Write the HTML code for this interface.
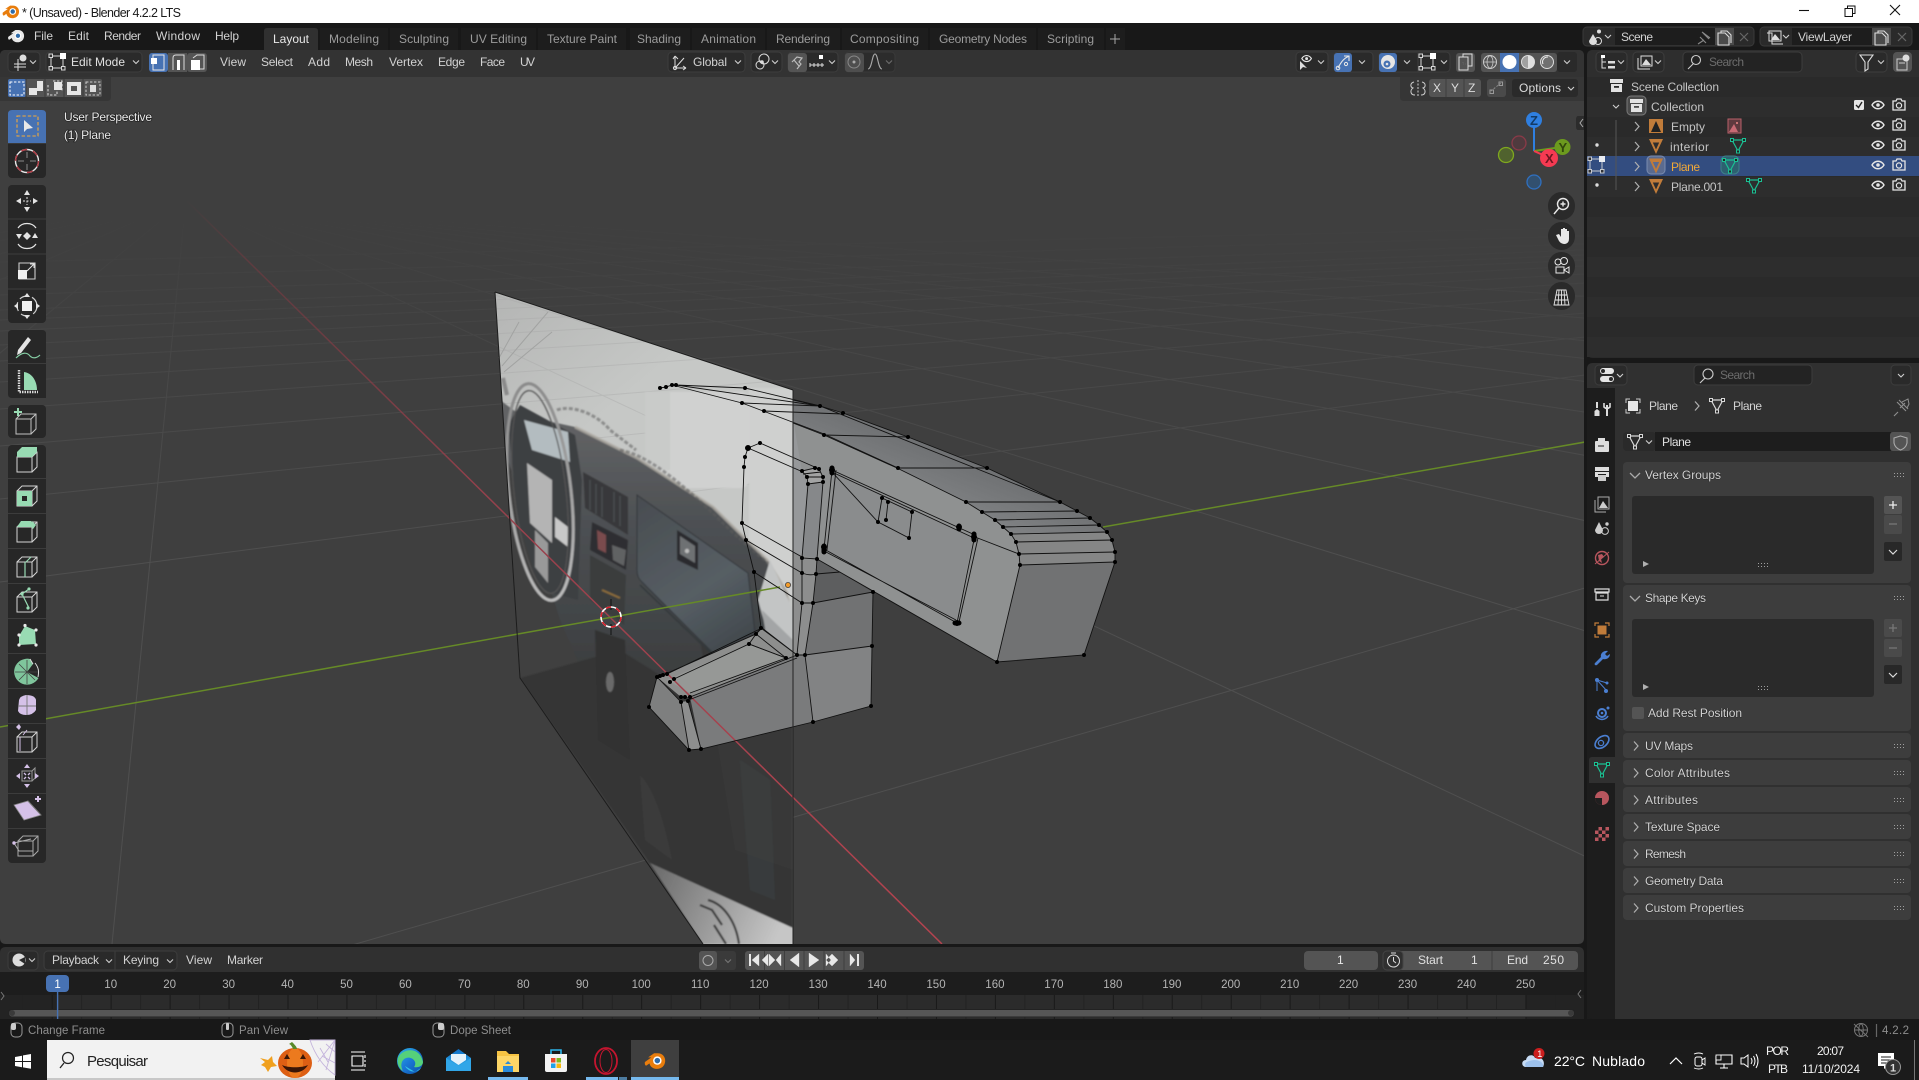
<!DOCTYPE html>
<html><head><meta charset="utf-8"><title>Blender 4.2.2 LTS</title>
<style>
html,body{margin:0;padding:0;background:#181818;overflow:hidden}
svg{display:block;position:absolute;left:0;top:0}
text{font-family:"Liberation Sans",sans-serif;font-size:12px;fill:#d2d2d2}
.tab{fill:#9c9c9c}
.dim{fill:#a4a4a4}
.tl{font-size:11.5px;fill:#b4b4b4;text-anchor:middle}
.st{fill:#8e8e8e;font-size:11.5px}
.ov{fill:#e8e8e8;font-weight:normal;paint-order:stroke;stroke:#222;stroke-width:1.4px}
.sh{paint-order:stroke;stroke:#2a2a2a;stroke-width:1px}
.w{fill:#fff}
.ic{fill:none;stroke:#d8d8d8;stroke-width:1.2}
.icf{fill:#d8d8d8}
</style></head><body>
<svg width="1919" height="1080" viewBox="0 0 1919 1080" xmlns="http://www.w3.org/2000/svg">
<defs>
<filter id="bl" x="-5%" y="-5%" width="110%" height="110%"><feGaussianBlur stdDeviation=".8"/></filter>
<linearGradient id="fade" gradientUnits="userSpaceOnUse" x1="0" y1="215" x2="0" y2="560"><stop offset="0" stop-color="#4b4b4b" stop-opacity="0"/><stop offset=".45" stop-color="#4b4b4b" stop-opacity=".7"/><stop offset="1" stop-color="#4f4f4f"/></linearGradient>
<linearGradient id="red" gradientUnits="userSpaceOnUse" x1="186" y1="200" x2="942" y2="944"><stop offset="0" stop-color="#7a3840" stop-opacity="0"/><stop offset=".08" stop-color="#7a3840" stop-opacity=".5"/><stop offset=".4" stop-color="#95414c"/><stop offset="1" stop-color="#b5434f"/></linearGradient>
<linearGradient id="pl" gradientUnits="userSpaceOnUse" x1="495" y1="292" x2="600" y2="420"><stop offset="0" stop-color="#b4b5b4"/><stop offset="1" stop-color="#c6c8c6"/></linearGradient>
<linearGradient id="dsh" gradientUnits="userSpaceOnUse" x1="0" y1="420" x2="0" y2="760"><stop offset="0" stop-color="#626365"/><stop offset=".3" stop-color="#4d5053"/><stop offset=".6" stop-color="#414446"/><stop offset="1" stop-color="#333"/></linearGradient>
<linearGradient id="glv" gradientUnits="userSpaceOnUse" x1="640" y1="500" x2="740" y2="650"><stop offset="0" stop-color="#494d51"/><stop offset=".6" stop-color="#565e64"/><stop offset="1" stop-color="#40474b"/></linearGradient>
<linearGradient id="btm" gradientUnits="userSpaceOnUse" x1="650" y1="870" x2="780" y2="930"><stop offset="0" stop-color="#6a6a6a"/><stop offset="1" stop-color="#c6c6c6"/></linearGradient>
<linearGradient id="whl" gradientUnits="userSpaceOnUse" x1="0" y1="383" x2="0" y2="602"><stop offset="0" stop-color="#8a8a8a"/><stop offset="1" stop-color="#bcbcbc"/></linearGradient>
<linearGradient id="top" gradientUnits="userSpaceOnUse" x1="980" y1="460" x2="960" y2="510"><stop offset="0" stop-color="#6d6f71"/><stop offset="1" stop-color="#7f8183"/></linearGradient>
<linearGradient id="edge" x1="0" y1="0" x2="1" y2="1"><stop offset="0" stop-color="#2fb7e6"/><stop offset=".5" stop-color="#1a78d6"/><stop offset="1" stop-color="#0d4fa8"/></linearGradient>
<linearGradient id="mail" x1="0" y1="0" x2="0" y2="1"><stop offset="0" stop-color="#0f6fc6"/><stop offset="1" stop-color="#34b6ef"/></linearGradient>
<pattern id="tk" patternUnits="userSpaceOnUse" x="51.7" y="995" width="58.95" height="24"><rect width="58.95" height="24" fill="none"/><rect x="0" width="1" height="24" fill="#191919"/><rect x="29.5" width="1" height="24" fill="#222"/></pattern>
<clipPath id="plc"><path d="M495 292L793 390V944H703L520 678Z"/></clipPath>
<clipPath id="vp"><rect x="0" y="77" width="1584" height="867"/></clipPath>
<path id="grid" d="M0 1047L1585 588M0 582L1585 375M0 499L1585 337M0 446L1585 313M0 409L1585 296M0 382L1585 283M0 361L1585 274M0 345L1585 266M0 331L1585 260M0 320L1585 255M0 310L1585 250M0 295L1585 244M0 279L1585 236M0 262L1585 228M186 200L112 944M186 200L-718 944M186 200L-1548 944M186 200L-2378 944M186 200L-3208 944M186 200L-4038 944M186 200L-5698 944M186 200L-8000 944M186 200L1772 944M186 200L2602 944M186 200L3432 944M186 200L4262 944M186 200L5092 944M186 200L5922 944M186 200L6752 944M186 200L7582 944M186 200L9000 944M186 200L11000 944"/>
<path id="cube" d="M-10 -6V9H5V-6ZM-10 -6L-5 -11H10V4L5 9M5 -6L10 -11" fill="none" stroke="#d4d4d4" stroke-width="1"/>
<g id="eye"><path d="M-6 0C-3 -5 3 -5 6 0C3 5 -3 5 -6 0Z" fill="none" stroke="#e6e6e6" stroke-width="1.4"/><circle r="1.8" fill="#e6e6e6"/></g>
<g id="cam"><path d="M-6 -4H-3L-2 -6H2L3 -4H6V5H-6Z" fill="none" stroke="#e6e6e6" stroke-width="1.3"/><circle cy=".5" r="2.6" fill="none" stroke="#e6e6e6" stroke-width="1.2"/></g>
<g id="mesh"><path d="M-6 -5H6L0 6Z M-6 -5" fill="none" stroke="currentColor" stroke-width="1.2"/><rect x="-7.5" y="-6.5" width="3" height="3" fill="#222" stroke="currentColor"/><rect x="4.5" y="-6.5" width="3" height="3" fill="#222" stroke="currentColor"/><rect x="-1.5" y="5" width="3" height="3" fill="#222" stroke="currentColor"/></g>
<path id="obj" d="M-7 -7H7L0 8ZM-3.2 -3.5H3.2L0 3.5Z" fill-rule="evenodd" fill="#c17c3a"/>
<path id="grip" d="M0 0h1v1h-1zM3 0h1v1h-1zM6 0h1v1h-1zM9 0h1v1h-1zM0 3h1v1h-1zM3 3h1v1h-1zM6 3h1v1h-1zM9 3h1v1h-1z" fill="#a0a0a0"/>
<path id="chd" d="M-3 -1.5L0 1.5L3 -1.5" fill="none" stroke="#d0d0d0" stroke-width="1.1"/>
<path id="chr" d="M-2 -4.5L2 0L-2 4.5" fill="none" stroke="#b0b0b0" stroke-width="1.2"/>
<g id="mode"><path d="M-6 -6H6V6H-6Z" fill="none" stroke="#d8d8d8" stroke-width="1"/><rect x="-8" y="-8" width="3.5" height="3.5" fill="#303030" stroke="#d8d8d8"/><rect x="3" y="-9" width="6" height="6" fill="#fff"/><rect x="-8" y="4.5" width="3.5" height="3.5" fill="#303030" stroke="#d8d8d8"/><rect x="4.5" y="4.5" width="3.5" height="3.5" fill="#303030" stroke="#d8d8d8"/></g>
<g id="blend"><path fill="currentColor" d="M1 13L8 8H4.5L11 3.5H15C20 3.5 23.5 7.5 23 12.5C22.5 18 18 21 13 20.5C9 20 6.5 17.5 6 14.5L2.5 17C1 17 .6 14.5 1 13Z"/><circle cx="14.5" cy="11.5" r="4.6" fill="#fff"/><circle cx="14.5" cy="11.5" r="3" fill="#2d6aa8"/></g>
</defs>

<!-- title bar -->
<rect width="1919" height="23" fill="#fff"/>
<use href="#blend" transform="translate(2,3) scale(.74)" style="color:#e87d0d"/>
<text x="22" y="17" textLength="159" style="fill:#1a1a1a;font-size:12.5px">* (Unsaved) - Blender 4.2.2 LTS</text>
<path d="M1799 10.5H1809" stroke="#111" stroke-width="1.1"/>
<path d="M1845 8.5H1852.5V16.5H1845ZM1847.5 8.5V6H1855V13.5H1852.5" fill="none" stroke="#111" stroke-width="1"/>
<path d="M1890 5L1900 15M1900 5L1890 15" stroke="#111" stroke-width="1.1"/>

<!-- top bar -->
<rect y="23" width="1919" height="27" fill="#181818"/>
<use href="#blend" transform="translate(7.5,27.5) scale(.72)" style="color:#e8e8e8"/>
<g>
<text x="34" y="40" textLength="19">File</text><text x="68" y="40" textLength="21">Edit</text><text x="104" y="40" textLength="37">Render</text><text x="156" y="40" textLength="44">Window</text><text x="215" y="40" textLength="24">Help</text>
</g>
<path d="M264 50V31Q264 28 267 28H315Q318 28 318 31V50Z" fill="#303030"/>
<path d="M320 50V28H388V50ZM390 50V28H458V50ZM461 50V28H536V50ZM538 50V28H626V50ZM630 50V28H690V50ZM692 50V28H765V50ZM767 50V28H840V50ZM842 50V28H928V50ZM930 50V28H1036V50ZM1038 50V28H1104V50ZM1106 50V28H1125V50Z" fill="#1d1d1d"/>
<text x="273" y="43" textLength="36" style="fill:#e8e8e8">Layout</text>
<text class="tab" x="329" y="43" textLength="50">Modeling</text><text class="tab" x="399" y="43" textLength="50">Sculpting</text><text class="tab" x="470" y="43" textLength="57">UV Editing</text><text class="tab" x="547" y="43" textLength="70">Texture Paint</text><text class="tab" x="637" y="43" textLength="44">Shading</text><text class="tab" x="701" y="43" textLength="55">Animation</text><text class="tab" x="776" y="43" textLength="54">Rendering</text><text class="tab" x="850" y="43" textLength="69">Compositing</text><text class="tab" x="939" y="43" textLength="88">Geometry Nodes</text><text class="tab" x="1047" y="43" textLength="47">Scripting</text>
<path d="M1110 39H1120M1115 34V44" stroke="#a8a8a8" stroke-width="1"/>

<!-- top-right scene/viewlayer -->
<rect x="1583" y="27" width="171" height="19" rx="4" fill="#2a2a2a" stroke="#3a3a3a"/>
<rect x="1615" y="28" width="100" height="17" fill="#1d1d1d"/>
<rect x="1715" y="28" width="19" height="17" fill="#4b4b4b"/>
<path d="M1593 34L1589 41A4 4 0 0 0 1597 41Z" fill="#ddd"/><circle cx="1599" cy="31.5" r="2" fill="#ddd"/><circle cx="1598" cy="41" r="3.5" fill="none" stroke="#ddd"/>
<use href="#chd" x="1608" y="36.5"/>
<text x="1621" y="41" textLength="32">Scene</text>
<path d="M1702 32L1710 38M1704 40L1698 44M1700 37L1706 43M1703 33L1709 39" stroke="#888" stroke-width="1.1" fill="none"/>
<path d="M1718 33H1725L1729 37V45H1718Z M1721 33V31H1727L1731 35V43" fill="none" stroke="#ddd" stroke-width="1.1"/>
<path d="M1740 33L1748 41M1748 33L1740 41" stroke="#666" stroke-width="1.2"/>
<rect x="1760" y="27" width="152" height="19" rx="4" fill="#2a2a2a" stroke="#3a3a3a"/>
<rect x="1792" y="28" width="80" height="17" fill="#1d1d1d"/><rect x="1872" y="28" width="19" height="17" fill="#4b4b4b"/>
<path d="M1767 33H1772V44H1783M1769 31H1781V41H1769Z" fill="none" stroke="#ddd"/><path d="M1771 40L1775 34L1780 40Z" fill="#ddd"/>
<use href="#chd" x="1786" y="36.5"/>
<text x="1798" y="41" textLength="54">ViewLayer</text>
<path d="M1875 33H1882L1886 37V45H1875Z M1878 33V31H1884L1888 35V43" fill="none" stroke="#ddd" stroke-width="1.1"/>
<path d="M1898 33L1906 41M1906 33L1898 41" stroke="#666" stroke-width="1.2"/>

<!-- VIEWPORT -->
<path d="M0 56Q0 50 6 50H1578Q1584 50 1584 56V938Q1584 944 1578 944H6Q0 944 0 938Z" fill="#3f3f3f"/>
<g clip-path="url(#vp)">
<use href="#grid" fill="none" stroke="url(#fade)" stroke-width="1"/>

<!-- plane -->
<path d="M495 292L793 390V944H703L520 678Z" fill="url(#pl)"/>
<use href="#grid" fill="none" stroke="#a2a3a2" stroke-width="1" clip-path="url(#plc)" opacity=".35"/>
<path d="M519 322L499 358M548 312L502 366M552 332L504 372" stroke="#a2a3a2" fill="none"/>
<g clip-path="url(#plc)"><g filter="url(#bl)">
<rect x="645" y="392" width="104" height="96" rx="8" fill="#d0d1d0"/>
<rect x="749" y="388" width="50" height="210" fill="#cfd0cf"/>
<path d="M645 392H670V470H645Z" fill="#c9cbc9"/>
<!-- dark lower -->
<path d="M500 400L520 415L575 427L637 458L713 507L767 560L787 593L793 640V944H520L505 600Z" fill="url(#dsh)"/>
<path d="M500 440L530 520L560 620L620 760L720 944H500Z" fill="#404040"/>
<path d="M520 678L650 863L793 928V760L700 700L620 650Z" fill="#343434"/>
<path d="M700 640L793 700V870L735 850Z" fill="#383838"/>
<path d="M740 760L770 780L775 900L750 890Z" fill="#3c4143" opacity=".6"/>
<path d="M650 863L793 928V944H703Z" fill="url(#btm)"/>
<path d="M700 905L712 910L722 925M708 900C724 904 736 922 739 944M714 925L726 944" fill="none" stroke="#3a3a3a" stroke-width="2.2"/>
<!-- left instruments -->
<path d="M508 425L520 405L575 435L582 480L578 600L540 590L518 520Z" fill="#3e4042"/>
<path d="M524 420L568 432L570 462L532 450Z" fill="#b3bcc0"/>
<path d="M527 463L552 480L552 543L530 523Z" fill="#b4b4b4"/>
<path d="M535 530L548 543L548 583L535 567Z" fill="#999"/>
<path d="M555 517L568 527L568 547L555 537Z" fill="#c8c8c8"/>
<ellipse cx="540" cy="492" rx="31" ry="109" fill="none" stroke="url(#whl)" stroke-width="3" transform="rotate(-6.5 540 492)"/>
<ellipse cx="540" cy="492" rx="26" ry="102" fill="none" stroke="#545454" stroke-width="1.2" transform="rotate(-6.5 540 492)"/>
<path d="M503 378L507 395" stroke="#8a8a8a" stroke-width="4"/>
<!-- rim light -->
<path d="M575 427L637 458L713 507L767 560L787 593L792 640" fill="none" stroke="#aeaaa2" stroke-width="3" opacity=".75"/>
<path d="M557 410C570 405 595 412 610 430L636 450M620 450C650 455 690 490 730 530L770 565" fill="none" stroke="#5d5d5d" stroke-width="3" stroke-dasharray="4 2" opacity=".55"/>
<path d="M770 560L793 610V680L775 660L758 600Z" fill="#c3c5c5"/>
<path d="M762 610L793 640V700L770 660Z" fill="#a3a5a6"/>
<!-- vents -->
<path d="M583 472L628 497V535L585 508Z" fill="#38393b"/>
<path d="M590 480V510M596 484V514M602 487V517M614 492V522M620 496V526" stroke="#4d4f51" stroke-width="1.2"/>
<path d="M592 522L628 540L626 570L590 550Z" fill="#2f2f31"/>
<path d="M597 530L606 535V553L598 549Z" fill="#7a4c4e"/><path d="M612 545L626 550L624 566L613 560Z" fill="#606264"/>
<path d="M590 555L626 575L624 625L590 600Z" fill="#3b3c3d"/>
<path d="M602 590L620 598" stroke="#8a6c3a" stroke-width="2"/>
<!-- glove box -->
<path d="M637 495L748 573L755 633L713 653L642 582Q637 578 637 570Z" fill="url(#glv)" stroke="#33363a" stroke-width="1"/>
<path d="M677 530L698 543L698 570L677 560Z" fill="#2a2c2e"/><path d="M680 536L695 546V563L680 554Z" fill="#6e7173"/><circle cx="687" cy="551" r="2.2" fill="#bdbdbd"/>
<path d="M640 585L715 657" stroke="#33373a" stroke-width="1.5"/>
<!-- lower console photo -->
<path d="M595 630L625 640L630 760L598 740Z" fill="#323232"/>
<ellipse cx="610" cy="682" rx="4" ry="10" fill="#6a6a6a"/>
<path d="M640 775C655 790 665 825 672 860L645 840Z" fill="#3a3a3a"/>
</g></g>

<!-- mesh faces -->
<path d="M793 400L820 406L843 413L908 437L987 468L1060 502L1077 511L1090 518L1099 525L1107 532L1112 540L1115 552L1115 562L1020 565L1019 554L1016 542L1011 534L1003 527L995 520L982 512L966 502L897 468L824 435L793 423Z" fill="url(#top)"/>
<path d="M1020 554L1115 552V562L1020 565ZM1011 534L1107 532L1115 552L1019 554Z" fill="#858686"/>
<path d="M793 423L824 435L897 468L966 502L982 512L995 520L1003 527L1011 534L1016 542L1019 554L1020 565L997 662L817 559L793 545Z" fill="#8f9191"/>
<path d="M1020 565L1115 562L1084 655L997 662Z" fill="#717273"/>
<path d="M793 418L802 472L807 484L802 558L793 553Z" fill="#96989a"/>
<path d="M808 484L823 482L817 559L802 558Z" fill="#86888a"/>
<path d="M802 471L819 468L823 482L808 484Z" fill="#a3a4a4"/>
<path d="M834 472L973 538L956 620L826 550Z" fill="#8a8c8d"/>
<path d="M817 559L816 574L813 603L873 592Z" fill="#5d5e5f"/>
<path d="M793 553L817 559L816 574L813 603L805 655H793Z" fill="#8d8e8e"/>
<path d="M813 603L873 592L872 646L805 655Z" fill="#717273"/>
<path d="M805 655L872 646L871 706L813 722Z" fill="#828384"/>
<path d="M690 697L797 655H805L813 722L701 749Z" fill="#7a7b7c"/>
<path d="M681 702L688 701L701 749L689 750Z" fill="#8d8e8e"/>
<path d="M657 677L681 702L689 750L649 707Z" fill="#7e7f7f"/>
<path d="M657 677L667 674L756 634L762 628L797 655L690 697L681 697Z" fill="#8d8e8d"/>
<path d="M667 680L749 644L786 658L690 693Z" fill="#9a9b9a" opacity=".75"/>

<!-- red & green axes -->
<path d="M186 200L942 944" stroke="url(#red)" stroke-width="1.5" fill="none"/>
<path d="M0 727L780 587M1103 527L1585 442" stroke="#668a27" stroke-width="1.5" fill="none"/>

<!-- wires -->
<g fill="none" stroke="#111" stroke-width=".9">
<path d="M660 388L666 387L672 385L676 385L820 406L1060 502M676 385L745 388L820 406M672 385L742 403L824 434L898 468M742 403L820 406M764 411L843 414"/>
<path d="M793 400L820 406L843 413L908 437L987 468L1060 502L1077 511L1090 518L1099 525L1107 532L1112 540L1115 552L1115 562L1084 655L997 662L1020 565L1019 554L1016 542L1011 534L1003 527L995 520L982 512L966 502L897 468L824 435L793 423"/>
<path d="M824 435L908 437M897 468L987 468M966 502L1060 502M982 512L1077 511M995 520L1090 518M1003 527L1099 525M1011 534L1107 532M1016 542L1112 540M1019 554L1115 552M1020 565L1115 562"/>
<path d="M997 662L817 559"/>
<path d="M760 443L817 468M748 448L803 472M748 448L745 457L744 467L742 523L746 540L754 572L761 628L756 634L749 644M742 523L802 557M746 540L802 573M754 572L802 603M761 628L797 655M762 628L797 655M756 634L786 658M749 644L786 658"/>
<path d="M760 443L748 448"/>
<path d="M802 471L807 477L808 484L802 558L817 559L823 482L823 477L819 469L815 468L802 471M808 484L823 482M807 477L823 477M803 474L821 472"/>
<path d="M802 558L802 573L802 603L797 655M817 559L816 574L813 603L805 655M802 573Q810 576 816 574M816 574L840 572M802 603H813L873 592M797 655H805L872 646M873 592L872 646L871 706L813 722L701 749L689 750L649 707L657 677L660 677"/>
<path d="M832 470L824 549M836 470L827 550M832 470L975 535M834 473L974 538M957 623L824 549M956 620L826 552M975 535L957 623M978 538L959 622"/>
<path d="M975 537L1019 554M832 472L878 522L882 498L912 512L909 538L878 522M888 502L886 520"/>
<path d="M805 655L813 722M681 702L689 750M688 701L701 749M657 677L681 702M667 674L762 628M663 675L756 634M674 679L749 644L786 658M690 697L797 655M686 701L797 658M690 693L786 658M762 628L756 634"/>
</g>
<path d="M793 390V944" stroke="#222" stroke-width="1"/>
<path d="M495 292L793 390M495 292L520 678L703 944" fill="none" stroke="#1c1c1c" stroke-width="1"/>

<!-- vertices -->
<path d="M660 388h0M666 387h0M672 385h0M676 385h0M745 388h0M742 403h0M764 411h0M820 406h0M843 413h0M824 435h0M898 468h0M908 437h0M987 468h0M966 502h0M982 512h0M995 520h0M1003 527h0M1011 534h0M1016 542h0M1019 554h0M1020 565h0M1060 502h0M1077 511h0M1090 518h0M1099 525h0M1107 532h0M1112 540h0M1115 552h0M1115 562h0M1084 655h0M997 662h0M760 443h0M745 457h0M744 467h0M742 523h0M746 540h0M754 572h0M761 628h0M756 634h0M749 644h0M802 471h0M807 477h0M808 484h0M802 558h0M817 559h0M823 482h0M823 477h0M819 469h0M815 468h0M802 573h0M816 574h0M802 603h0M813 603h0M797 655h0M805 655h0M786 658h0M873 592h0M872 646h0M871 706h0M813 722h0M701 749h0M689 750h0M649 707h0M657 677h0M660 676h0M663 675h0M667 674h0M674 679h0M670 682h0M690 697h0M688 701h0M681 702h0M681 697h0M685 697h0M882 498h0M912 512h0M909 538h0M878 522h0M886 520h0M888 502h0" stroke="#000" stroke-width="4" stroke-linecap="round"/>
<path d="M748 448h0M832 470h0M974 537h0M957 623h0M824 547h0M959 527h0" stroke="#000" stroke-width="6" stroke-linecap="round"/>
<path d="M832 468v5M824 546v6M974 534v6M955 623h4M959 526v3" stroke="#000" stroke-width="5" stroke-linecap="round"/>

<!-- origin & 3D cursor -->
<circle cx="788" cy="585" r="2.6" fill="#f29b2b" stroke="#444" stroke-width=".8"/>
<path d="M611 599V610M611 624V635" stroke="#111" stroke-width="1"/>
<circle cx="611" cy="617" r="10" fill="none" stroke="#fff" stroke-width="1.6"/>
<circle cx="611" cy="617" r="10" fill="none" stroke="#d81f2a" stroke-width="1.6" stroke-dasharray="5.2 5.2"/>
</g>

<!-- viewport header -->
<path d="M0 77V56Q0 50 6 50H1578Q1584 50 1584 56V77Z" fill="#333"/>
<path d="M0 77H111V97Q111 101 107 101H0Z" fill="#363636"/>
<path d="M1584 77H1400V97Q1400 101 1404 101H1584Z" fill="#363636"/>

<rect x="8" y="52" width="32" height="20" rx="4" fill="#2a2a2a" stroke="#3d3d3d"/>
<path d="M14 67H26M18 59V71M14 64H26" stroke="#ddd" stroke-width="1" fill="none"/><circle cx="23" cy="58" r="3.5" fill="#ddd"/>
<use href="#chd" x="33" y="62"/>
<rect x="46" y="52" width="96" height="20" rx="4" fill="#2a2a2a" stroke="#3d3d3d"/>
<use href="#mode" x="57" y="62"/>
<text x="71" y="66" textLength="54" style="fill:#e2e2e2">Edit Mode</text>
<use href="#chd" x="136" y="62"/>

<rect x="149" y="53" width="19" height="19" rx="3" fill="#4772b3"/>
<rect x="168" y="53" width="19" height="19" fill="#545454"/>
<rect x="187" y="53" width="20" height="19" rx="3" fill="#545454"/>
<path d="M153 55H164V70H153Z M153 55" fill="none" stroke="#e8e8e8" stroke-width="1" transform="translate(0,0)"/><rect x="151" y="58" width="6" height="6" fill="#fff"/>
<path d="M173 70V58Q173 55 176 55H184V70" fill="none" stroke="#ddd"/><rect x="177" y="60" width="3" height="10" fill="#fff"/>
<path d="M193 58L197 55H204V69H200" fill="none" stroke="#ddd"/><rect x="191" y="60" width="9" height="10" fill="#fff"/>

<text x="220" y="66" textLength="26">View</text><text x="261" y="66" textLength="32">Select</text><text x="308" y="66" textLength="22">Add</text><text x="345" y="66" textLength="28">Mesh</text><text x="389" y="66" textLength="34">Vertex</text><text x="438" y="66" textLength="27">Edge</text><text x="480" y="66" textLength="25">Face</text><text x="520" y="66" textLength="15">UV</text>

<rect x="668" y="52" width="77" height="20" rx="4" fill="#2a2a2a" stroke="#3d3d3d"/>
<path d="M675 56V68H686M675 56L673 59M675 56L678 59M686 68L683 66M686 68L683 70M676 67L684 58" fill="none" stroke="#ddd"/><circle cx="675" cy="68" r="1.6" fill="none" stroke="#ddd"/>
<text x="693" y="66" textLength="34">Global</text>
<use href="#chd" x="738" y="62"/>
<rect x="751" y="52" width="31" height="20" rx="4" fill="#2a2a2a" stroke="#3d3d3d"/>
<circle cx="760" cy="65" r="4" fill="none" stroke="#ddd"/><circle cx="764" cy="59" r="5" fill="none" stroke="#ddd"/><circle cx="762" cy="62" r="1.8" fill="#ddd"/>
<use href="#chd" x="775" y="62"/>
<rect x="788" y="52" width="50" height="20" rx="4" fill="#2a2a2a" stroke="#3d3d3d"/>
<rect x="788" y="53" width="19" height="19" rx="3" fill="#545454"/>
<path d="M792 62L797 57L802 58L799 62L801 64L797 69M794 60L799 66" fill="none" stroke="#bbb" stroke-width="1.2"/>
<path d="M810 63V67M810 65H824M814 63V67M818 63V67M822 63V67" stroke="#ddd"/><rect x="819" y="55" width="4" height="4" fill="#fff"/>
<use href="#chd" x="832" y="62"/>
<rect x="845" y="52" width="50" height="20" rx="4" fill="#2c2c2c" stroke="#3a3a3a"/>
<rect x="845" y="53" width="19" height="19" rx="3" fill="#4e4e4e"/>
<circle cx="854" cy="62" r="6" fill="none" stroke="#888"/><circle cx="854" cy="62" r="1.5" fill="#aaa"/>
<path d="M868 69C872 69 872 54 875 54C878 54 878 69 882 69" fill="none" stroke="#aaa" stroke-width="1.1"/>
<use href="#chd" x="889" y="62" opacity=".4"/>

<rect x="1296" y="52" width="32" height="20" rx="4" fill="#2a2a2a" stroke="#3d3d3d"/>
<use href="#eye" x="1307" y="59" transform="translate(261,11.4) scale(.8)"/><path d="M1300 61L1300 70L1303 67L1307 68Z" fill="#ddd"/>
<use href="#chd" x="1321" y="62"/>
<rect x="1334" y="52" width="39" height="20" rx="4" fill="#2a2a2a" stroke="#3d3d3d"/>
<rect x="1334" y="53" width="18" height="19" rx="3" fill="#4772b3"/>
<path d="M1338 68C1342 60 1345 58 1349 56M1344 56H1349V61" fill="none" stroke="#e8e8e8" stroke-width="1.1"/><circle cx="1338" cy="68" r="1.8" fill="none" stroke="#e8e8e8"/><circle cx="1346" cy="64" r="1.6" fill="none" stroke="#e8e8e8"/>
<use href="#chd" x="1362" y="62"/>
<rect x="1379" y="52" width="71" height="20" rx="4" fill="#2a2a2a" stroke="#3d3d3d"/>
<rect x="1379" y="53" width="18" height="19" rx="3" fill="#4772b3"/>
<circle cx="1388" cy="62" r="7" fill="#e6e6e6"/><circle cx="1387" cy="64" r="3" fill="#4772b3" stroke="#4772b3"/><circle cx="1387" cy="64" r="1.3" fill="#e6e6e6"/>
<use href="#chd" x="1407" y="62"/><path d="M1418 53V72" stroke="#3d3d3d"/>
<use href="#mode" x="1427" y="62"/><use href="#chd" x="1444" y="62"/>
<rect x="1456" y="53" width="19" height="19" rx="3" fill="#545454"/>
<path d="M1459 57H1468V70H1459ZM1463 57V54H1472V66H1468" fill="none" stroke="#ddd"/><path d="M1463 64h.1M1465 64h.1M1463 62v.1" stroke="#ddd"/>
<rect x="1481" y="53" width="76" height="19" rx="3" fill="#545454"/>
<rect x="1500" y="53" width="19" height="19" fill="#4772b3"/>
<rect x="1557" y="52" width="20" height="20" rx="3" fill="#2a2a2a"/>
<circle cx="1490" cy="62" r="6.5" fill="none" stroke="#ccc"/><path d="M1483.5 62H1496.5M1490 55.5C1486 58 1486 66 1490 68.5M1490 55.5C1494 58 1494 66 1490 68.5" stroke="#ccc" fill="none" stroke-width=".8"/>
<circle cx="1509.5" cy="62" r="7" fill="#fff"/>
<circle cx="1528" cy="62" r="6.5" fill="#a0a0a0" stroke="#ddd"/><path d="M1528 55.5A6.5 6.5 0 0 1 1528 68.5Z" fill="#e0e0e0"/>
<circle cx="1547" cy="62" r="6.5" fill="#707070" stroke="#ddd"/><path d="M1543 64A5 5 0 0 1 1548 57" fill="none" stroke="#eee"/>
<use href="#chd" x="1567" y="62"/>

<!-- 1st tool row -->
<rect x="8" y="79" width="18" height="18" rx="2" fill="#4772b3"/>
<rect x="26" y="79" width="76" height="18" rx="2" fill="#545454"/>
<path d="M10 82H24V95H10Z" fill="none" stroke="#fff" stroke-dasharray="2.4 1.6"/>
<path d="M29 88H37V81H43V91H37V95H29Z" fill="#e6e6e6"/>
<path d="M48 85V95H57V88M53 81H62V91" fill="none" stroke="#ddd" stroke-dasharray="2.4 1.6"/><rect x="54" y="82" width="8" height="8" fill="#e6e6e6"/>
<path d="M67 82H81V95H67Z" fill="#e6e6e6"/><rect x="71" y="86" width="6" height="5" fill="#555"/>
<path d="M86 82H100V95H86Z" fill="none" stroke="#ccc" stroke-dasharray="2.4 1.6"/><rect x="90" y="85" width="6" height="7" fill="#ddd"/>
<path d="M26 79V97M45 79V97M64 79V97M83 79V97" stroke="#3a3a3a"/>

<rect x="1429" y="79" width="52" height="18" rx="3" fill="#545454"/>
<path d="M1446 79V97M1464 79V97" stroke="#3e3e3e"/>
<path d="M1418 80V97" stroke="#ccc" stroke-dasharray="2 1.5"/><path d="M1414 82C1410 83 1410 87 1413 88C1410 90 1410 95 1415 95M1422 82C1426 83 1426 87 1423 88C1426 90 1426 95 1421 95" fill="none" stroke="#ccc"/>
<text x="1433" y="92" style="fill:#ddd">X</text><text x="1451" y="92" style="fill:#ddd">Y</text><text x="1468" y="92" style="fill:#ddd">Z</text>
<rect x="1487" y="79" width="19" height="18" rx="3" fill="#4a4a4a"/>
<path d="M1491 91L1501 83" stroke="#888" stroke-dasharray="2 1.5"/><rect x="1490" y="90" width="3.5" height="3.5" fill="none" stroke="#999"/><rect x="1499" y="82" width="3.5" height="3.5" fill="none" stroke="#999"/>
<rect x="1512" y="79" width="66" height="18" rx="3" fill="#2a2a2a"/>
<text x="1519" y="92" textLength="42" style="fill:#dcdcdc">Options</text><use href="#chd" x="1571" y="88.5"/>

<!-- Toolbar -->
<rect x="8" y="110" width="38" height="68" rx="4" fill="#272727"/>
<path d="M8 143V114Q8 110 12 110H42Q46 110 46 114V143Z" fill="#4772b3"/>
<path d="M8 143.5H46" stroke="#3a3a3a"/>
<rect x="17" y="116" width="21" height="20" fill="none" stroke="#f2a93a" stroke-width="1.1" stroke-dasharray="3.4 2"/>
<path d="M24 120L24 132L27 129L33 128Z" fill="#e8e8e8"/>
<circle cx="27" cy="161" r="11.5" fill="none" stroke="#e8e8e8" stroke-width="1.4"/>
<circle cx="27" cy="161" r="11.5" fill="none" stroke="#b23a44" stroke-width="1.4" stroke-dasharray="6 6"/>
<path d="M27 152V158M27 164V170M18 161H24M30 161H36" stroke="#888"/>
<rect x="8" y="185" width="38" height="138" rx="4" fill="#272727"/>
<path d="M8 219H46M8 254H46M8 289H46" stroke="#3c3c3c"/>
<path d="M27 190L30 195H24ZM27 212L30 207H24ZM16 201L21 198V204ZM38 201L33 198V204Z" fill="#e4e4e4"/><path d="M27 197V205M23 201H31" stroke="#e4e4e4" stroke-dasharray="2 1.5"/>
<path d="M18 228C22 222 32 222 36 228M36 244C32 250 22 250 18 244" fill="none" stroke="#e4e4e4" stroke-width="1.2"/><path d="M27 232L31 236L27 240L23 236Z" fill="#e4e4e4"/><path d="M16 234L22 234L19 239ZM38 238H32L35 233Z" fill="#e4e4e4"/>
<path d="M19 263H35V279H19Z M19 263" fill="none" stroke="#ccc" stroke-width="1.1"/><rect x="18" y="270" width="9" height="9" fill="#f0f0f0"/><path d="M27 271L34 264M30 264H34V268" stroke="#e4e4e4" fill="none"/>
<rect x="22" y="301" width="10" height="10" fill="#f0f0f0"/><circle cx="27" cy="306" r="10" fill="none" stroke="#d0d0d0" stroke-width="1.2" stroke-dasharray="9 4"/><path d="M27 293L30 297H24ZM27 319L30 315H24ZM14 306L18 303V309ZM40 306L36 303V309Z" fill="#e4e4e4"/>
<path d="M8 334Q8 330 12 330H42Q46 330 46 334V398Q46 398 42 398H12Q8 398 8 394Z" fill="#272727"/><path d="M8 363.5H46" stroke="#3c3c3c"/>
<path d="M18 350L28 337L31 340L21 353L17 355Z" fill="#e4e4e4"/><path d="M16 358C22 352 27 352 30 356C33 359 37 358 40 355" fill="none" stroke="#86cfa5" stroke-width="1.2"/>
<path d="M19 370V392H38" fill="none" stroke="#d8d8d8" stroke-width="2.4" stroke-dasharray="1.5 1"/><path d="M24 390V372C32 373 37 381 37 390Z" fill="#98dbb3"/>
<rect x="8" y="405" width="38" height="33" rx="4" fill="#272727"/>
<use href="#cube" x="26" y="425" style="opacity:.9"/><path d="M14 412H22M18 408V416" stroke="#98dbb3" stroke-width="2"/>
<rect x="8" y="445" width="38" height="418" rx="4" fill="#272727"/>
<path d="M8 478.5H46M8 513.5H46M8 548.5H46M8 583.5H46M8 618.5H46M8 653.5H46M8 688.5H46M8 723.5H46M8 758.5H46M8 793.5H46M8 828.5H46" stroke="#3c3c3c"/>
<use href="#cube" x="27" y="463"/><path d="M17 457V452L22 447H37V452L32 457Z" fill="#98dbb3"/>
<use href="#cube" x="27" y="497"/><path d="M17 491H32V506H17ZM22 496V501H27V496Z" fill="#98dbb3" fill-rule="evenodd"/>
<use href="#cube" x="27" y="533"/><path d="M17 527L21 521H31L32 527Z" fill="#98dbb3"/><path d="M32 521L36 525L33 529L30 525Z" fill="#98dbb3"/>
<use href="#cube" x="27" y="568"/><path d="M25 562V577M26 562L31 557" stroke="#98dbb3" fill="none" stroke-width="1.2"/>
<use href="#cube" x="27" y="603"/><path d="M22 594L29 589M22 594L29 608" stroke="#98dbb3" stroke-width="1.2"/><circle cx="22" cy="594" r="1.6" fill="#98dbb3"/><circle cx="29" cy="589" r="1.6" fill="#98dbb3"/><circle cx="28" cy="608" r="1.6" fill="#98dbb3"/>
<path d="M25 626L35 630L36 644L19 645L19 636Z" fill="#98dbb3"/><g fill="#e8e8e8"><circle cx="25" cy="625.5" r="1.6"/><circle cx="36" cy="630" r="1.6"/><circle cx="36" cy="645" r="1.6"/><circle cx="19" cy="645" r="1.6"/><circle cx="19" cy="635" r="1.6"/></g>
<path d="M27 672L33 664L30 659A13 13 0 1 0 38.5 678Z" fill="#7fc59c"/><path d="M15 672H38M27 660V684M19 664L35 680M19 680L27 672" stroke="#444" stroke-width=".8"/><path d="M30 659L33 664M35 663C39 668 39 672 38 677" stroke="#ddd" fill="none"/>
<path d="M19 700Q20 696 26 695Q35 695 36 700V710Q33 715 26 715Q20 715 18 711Z" fill="#d5c1e8"/><path d="M18 706H36M27 695V715" stroke="#777" stroke-width=".9"/>
<use href="#cube" x="27" y="743"/><path d="M20 737V751M23 735L27 730" stroke="#d5c1e8" fill="none"/><path d="M16 727L19 724L21 727L19 730Z" fill="#d5c1e8"/>
<path d="M22 771H32V781H22Z M32 771L35 768V778L32 781" fill="none" stroke="#999"/><path d="M24 773l2 2M30 773l-2 2M24 779l2-2M30 779l-2-2" stroke="#d5c1e8" stroke-width="1.3"/><path d="M27 764L30 768H24ZM27 788L30 784H24ZM16 776L20 773V779ZM39 776L35 773V779Z" fill="#d5c1e8"/>
<path d="M14 805L28 801L41 815L24 820Z" fill="#d5c1e8" stroke="#888" stroke-width=".8"/><path d="M28 801L41 815" stroke="#777"/><path d="M35 799H41M38 796V802" stroke="#d5c1e8" stroke-width="2"/>
<use href="#cube" x="28" y="847" style="opacity:.75"/><path d="M14 843L31 839M14 843L19 851H33" stroke="#aaa" fill="none"/><circle cx="14" cy="843" r="1.7" fill="#d5c1e8"/>

<!-- overlay text -->
<text class="ov" x="64" y="121" textLength="88">User Perspective</text>
<text class="ov" x="64" y="139" textLength="47">(1) Plane</text>

<!-- gizmo -->
<path d="M1534 151V127" stroke="#2f7fe0" stroke-width="2"/><path d="M1534 151L1555 148" stroke="#6c9a1e" stroke-width="2"/><path d="M1534 151L1543 155" stroke="#f53a52" stroke-width="2"/>
<circle cx="1519" cy="143" r="7" fill="#4f3a3e" stroke="#8a3a48" stroke-width="1.3"/>
<circle cx="1506" cy="155" r="7.5" fill="#50622e" stroke="#7fa81e" stroke-width="1.3"/>
<circle cx="1534" cy="182" r="7" fill="#32506f" stroke="#2f70c0" stroke-width="1.3"/>
<circle cx="1534" cy="120" r="8" fill="#2f7fe0"/><text x="1530" y="125" style="font-size:13px;fill:#123a66;font-weight:bold">Z</text>
<circle cx="1562.5" cy="147" r="8" fill="#6c9a1e"/><text x="1558.5" y="152" style="font-size:13px;fill:#31470c;font-weight:bold">Y</text>
<circle cx="1549" cy="158" r="9" fill="#f53a52"/><text x="1545" y="163" style="font-size:13px;fill:#6e1621;font-weight:bold">X</text>
<path d="M1584 116H1578Q1576 116 1576 120V126Q1576 130 1578 130H1584Z" fill="#2c2c2c"/><path d="M1583 119L1580 123L1583 127" fill="none" stroke="#aaa"/>
<!-- nav -->
<g fill="#2a2a2a"><rect x="1548" y="192" width="27" height="28" rx="13.5"/><rect x="1548" y="222" width="27" height="28" rx="13.5"/><rect x="1548" y="252" width="27" height="28" rx="13.5"/><rect x="1548" y="282" width="27" height="28" rx="13.5"/></g>
<g transform="translate(-1,0)">
<circle cx="1564" cy="204" r="5.5" fill="none" stroke="#e8e8e8" stroke-width="1.4"/><path d="M1560 208L1555 214M1564 201.5V206.5M1561.5 204H1566.5" stroke="#e8e8e8" stroke-width="1.4"/>
<path d="M1557 235L1560 241Q1562 244 1566 244Q1570 243 1570 239V231H1568V236V229H1566V235V228H1564V235V229H1562V237L1560 234Z" fill="#e8e8e8"/>
<circle cx="1559" cy="262" r="3" fill="none" stroke="#e8e8e8"/><circle cx="1565" cy="261" r="3.5" fill="none" stroke="#e8e8e8"/><rect x="1557" y="267" width="8" height="6" fill="none" stroke="#e8e8e8"/><path d="M1565 270L1570 267V273Z" fill="none" stroke="#e8e8e8"/>
<path d="M1558 290H1567L1570 305H1555ZM1562.5 290V305M1557 295H1568.5M1556 300H1569.5M1560 290L1559 305M1565 290L1566 305" fill="none" stroke="#e8e8e8" stroke-width=".9"/>
</g>

<!-- TIMELINE -->
<path d="M0 953Q0 947 6 947H1578Q1584 947 1584 953V1019H0Z" fill="#303030"/>
<rect y="972" width="1584" height="23" fill="#1d1d1d"/>
<rect y="995" width="1584" height="24" fill="#232323"/>
<rect x="57.6" y="995" width="1468" height="24" fill="#2b2b2b"/>
<rect y="995" width="1584" height="24" fill="url(#tk)"/>
<rect x="8" y="1009" width="1567" height="8" rx="4" fill="#222"/>
<rect x="9" y="1010" width="1565" height="6.5" rx="3.2" fill="#565656"/>
<circle cx="12" cy="1013" r="3" fill="#3a3a3a"/><circle cx="1571" cy="1013" r="3" fill="#3a3a3a"/>
<path d="M57.6 992V1019" stroke="#4772b3" stroke-width="1.4"/>
<rect x="46" y="975" width="23" height="17" rx="4" fill="#4772b3"/>
<text x="57.6" y="988" style="fill:#fff;text-anchor:middle;font-size:11.5px">1</text>
<text class="tl" x="110.7" y="988">10</text><text class="tl" x="169.6" y="988">20</text><text class="tl" x="228.6" y="988">30</text><text class="tl" x="287.5" y="988">40</text><text class="tl" x="346.5" y="988">50</text><text class="tl" x="405.4" y="988">60</text><text class="tl" x="464.4" y="988">70</text><text class="tl" x="523.3" y="988">80</text><text class="tl" x="582.3" y="988">90</text><text class="tl" x="641.2" y="988">100</text><text class="tl" x="700.2" y="988">110</text><text class="tl" x="759.1" y="988">120</text><text class="tl" x="818.1" y="988">130</text><text class="tl" x="877" y="988">140</text><text class="tl" x="936" y="988">150</text><text class="tl" x="994.9" y="988">160</text><text class="tl" x="1053.9" y="988">170</text><text class="tl" x="1112.8" y="988">180</text><text class="tl" x="1171.8" y="988">190</text><text class="tl" x="1230.7" y="988">200</text><text class="tl" x="1289.7" y="988">210</text><text class="tl" x="1348.6" y="988">220</text><text class="tl" x="1407.6" y="988">230</text><text class="tl" x="1466.5" y="988">240</text><text class="tl" x="1525.5" y="988">250</text>
<path d="M1 992L4 996L1 1000" fill="none" stroke="#777"/>
<path d="M1581 990L1578 994L1581 998" fill="none" stroke="#777"/>

<rect x="8" y="951" width="30" height="19" rx="4" fill="#2a2a2a" stroke="#3d3d3d"/>
<circle cx="19" cy="960" r="6.5" fill="#ddd"/><path d="M19 960L25 957V964Z M19 960L15 966" fill="#2a2a2a"/><use href="#chd" x="32" y="960"/>
<rect x="44" y="951" width="133" height="19" rx="4" fill="#2a2a2a" stroke="#3d3d3d"/>
<path d="M115 951V970" stroke="#3d3d3d"/>
<text x="52" y="964" textLength="47">Playback</text><use href="#chd" x="109" y="961"/>
<text x="123" y="964" textLength="36">Keying</text><use href="#chd" x="170" y="961"/>
<text x="186" y="964" textLength="26">View</text><text x="227" y="964" textLength="36">Marker</text>

<rect x="699" y="951" width="37" height="19" rx="3" fill="#3a3a3a"/><rect x="699" y="951" width="18" height="19" rx="3" fill="#545454"/>
<circle cx="708" cy="960.5" r="5" fill="none" stroke="#aaa"/><use href="#chd" x="728" y="961" opacity=".4"/>
<rect x="745" y="951" width="119" height="19" rx="3" fill="#545454"/>
<path d="M764.5 951V970M784.5 951V970M804 951V970M824 951V970M844 951V970" stroke="#3e3e3e"/>
<path d="M759 954L752 960L759 966ZM768 954L762 960L768 966ZM769 954L775 960L769 966ZM781 954V966L776 960ZM799 953V967L790 960ZM809 953V967L819 960ZM826 954V966L831 960ZM832 954L838 960L832 966L826 960ZM850 954L855 960L850 966Z" fill="#e8e8e8" stroke="#e8e8e8" stroke-width=".3"/>
<path d="M750 954V966M858 954V966" stroke="#e8e8e8" stroke-width="2"/>
<rect x="1304" y="951" width="74" height="19" rx="4" fill="#545454"/><text x="1337" y="964" style="fill:#e8e8e8">1</text>
<rect x="1383" y="951" width="195" height="19" rx="4" fill="#545454"/><rect x="1383" y="951" width="20" height="19" rx="4" fill="#303030" stroke="#444"/>
<path d="M1492 951V970" stroke="#3e3e3e"/>
<circle cx="1393.5" cy="961" r="6" fill="none" stroke="#ddd"/><path d="M1391 953H1396M1393.5 957V961L1396 963" stroke="#ddd" fill="none"/>
<text x="1418" y="964" textLength="25" style="fill:#e0e0e0">Start</text><text x="1471" y="964" style="fill:#e0e0e0">1</text>
<text x="1507" y="964" textLength="21" style="fill:#e0e0e0">End</text><text x="1543" y="964" textLength="21" style="fill:#e0e0e0">250</text>

<!-- OUTLINER -->
<path d="M1587 56Q1587 50 1593 50H1919V358H1593Q1587 358 1587 352Z" fill="#2a2a2a"/>
<path d="M1587 77V56Q1587 50 1593 50H1919V77Z" fill="#2e2e2e"/>
<g fill="#2d2d2d"><rect x="1587" y="97" width="332" height="20"/><rect x="1587" y="137" width="332" height="20"/><rect x="1587" y="177" width="332" height="20"/><rect x="1587" y="217" width="332" height="20"/><rect x="1587" y="257" width="332" height="20"/><rect x="1587" y="297" width="332" height="20"/><rect x="1587" y="337" width="332" height="20"/></g>
<rect x="1587" y="156" width="332" height="20" fill="#334d80"/>
<rect x="1596" y="52" width="31" height="20" rx="4" fill="#2a2a2a" stroke="#3d3d3d"/>
<path d="M1602 57V68H1606M1602 62H1606" stroke="#ddd" fill="none"/><rect x="1601" y="55" width="4" height="3" fill="#fff"/><rect x="1608" y="61" width="7" height="2.5" fill="#ddd"/><rect x="1608" y="66" width="7" height="2.5" fill="#ddd"/>
<use href="#chd" x="1621" y="62"/>
<rect x="1633" y="52" width="31" height="20" rx="4" fill="#2a2a2a" stroke="#3d3d3d"/>
<path d="M1638 58V69H1650M1641 56H1652V66H1641Z" fill="none" stroke="#ddd"/><path d="M1642 65L1646 59L1651 65Z" fill="#ddd"/><use href="#chd" x="1658" y="62"/>
<rect x="1683" y="52" width="119" height="20" rx="4" fill="#232323" stroke="#3d3d3d"/>
<circle cx="1696" cy="60" r="4.5" fill="none" stroke="#ccc" stroke-width="1.1"/><path d="M1693 64L1688 69" stroke="#ccc" stroke-width="1.1"/>
<text x="1709" y="66" textLength="35" style="fill:#6c6c6c">Search</text>
<rect x="1856" y="52" width="31" height="20" rx="4" fill="#2a2a2a" stroke="#3d3d3d"/>
<path d="M1860 55H1873L1868 62V69L1865 71V62Z" fill="none" stroke="#ddd" stroke-width="1.1"/><use href="#chd" x="1881" y="62"/>
<rect x="1893" y="52" width="19" height="20" rx="4" fill="#545454"/>
<path d="M1897 59H1907V70H1897ZM1899 63H1905" fill="none" stroke="#ccc"/><circle cx="1906" cy="58" r="3.5" fill="#ddd"/>

<g transform="translate(-1,-1)">
<g><rect x="1611" y="80" width="13" height="4" fill="#e2e2e2"/><path d="M1612 85H1623V93H1612Z" fill="#e2e2e2"/><rect x="1615" y="87" width="5" height="1.8" fill="#2a2a2a"/></g>
<text x="1632" y="92" textLength="88" class="dim" style="fill:#c4c4c4">Scene Collection</text>
<use href="#chd" x="1617" y="107.5"/>
<rect x="1628" y="97" width="19" height="19" rx="4" fill="#4a4a4a" stroke="#7a7a7a"/><rect x="1631" y="100" width="13" height="4" fill="#e2e2e2"/><path d="M1632 105H1643V113H1632Z" fill="#e2e2e2"/><rect x="1635" y="107" width="5" height="1.8" fill="#4a4a4a"/>
<text x="1652" y="112" textLength="53" style="fill:#c4c4c4">Collection</text>
<rect x="1855" y="101" width="10" height="10" rx="1.5" fill="#e6e6e6"/><path d="M1857 106L1859.5 108.5L1863 103" fill="none" stroke="#222" stroke-width="1.4"/>
<path d="M1617 121V191" stroke="#555"/>
<use href="#chr" x="1638" y="127.5"/><use href="#chr" x="1638" y="147.5"/><use href="#chr" x="1638" y="167.5"/><use href="#chr" x="1638" y="187.5"/>
<rect x="1650" y="120" width="14" height="14" fill="#c17c3a"/><path d="M1657 122L1662 133H1652Z" fill="#222"/>
<text x="1672" y="132" textLength="34" style="fill:#c4c4c4">Empty</text>
<rect x="1729" y="120" width="13" height="14" fill="#5e3a3e" stroke="#b9606b"/><path d="M1730 133L1735 125L1739 133Z" fill="#c86a74"/><circle cx="1738" cy="124" r="1" fill="#e88"/>
<circle cx="1598" cy="146" r="1.7" fill="#ddd"/><circle cx="1598" cy="186" r="1.7" fill="#ddd"/>
<use href="#obj" x="1657" y="147"/>
<text x="1671" y="152" textLength="39" style="fill:#c4c4c4">interior</text>
<use href="#mesh" x="1739" y="146" style="color:#1bbf93"/>
<use href="#mode" x="1597" y="166" opacity=".9"/>
<rect x="1648" y="157" width="18" height="18" rx="4" fill="#5a6b90" stroke="#7a8cb0"/><use href="#obj" x="1657" y="166.5"/>
<text x="1672" y="172" textLength="29" style="fill:#f0a838">Plane</text>
<rect x="1722" y="157" width="18" height="18" rx="5" fill="#2d6070" stroke="#3c8088"/><use href="#mesh" x="1731" y="166" style="color:#1bbf93"/>
<use href="#obj" x="1657" y="187"/>
<text x="1672" y="192" textLength="52" style="fill:#c4c4c4">Plane.001</text>
<use href="#mesh" x="1755" y="186" style="color:#1bbf93"/>
<use href="#eye" x="1879" y="106"/><use href="#cam" x="1900" y="106"/>
<use href="#eye" x="1879" y="126"/><use href="#cam" x="1900" y="126"/>
<use href="#eye" x="1879" y="146"/><use href="#cam" x="1900" y="146"/>
<use href="#eye" x="1879" y="166"/><use href="#cam" x="1900" y="166"/>
<use href="#eye" x="1879" y="186"/><use href="#cam" x="1900" y="186"/>
</g>

<!-- PROPERTIES -->
<path d="M1587 369Q1587 363 1593 363H1919V1019H1593Q1587 1019 1587 1013Z" fill="#303030"/>
<rect x="1587" y="388" width="28" height="631" fill="#1d1d1d"/>
<path d="M1587 1013Q1587 1019 1593 1019H1615V1010H1587Z" fill="#1d1d1d"/>
<rect x="1595" y="365" width="32" height="20" rx="4" fill="#2a2a2a" stroke="#3d3d3d"/>
<rect x="1600" y="368" width="14" height="6" rx="3" fill="#e6e6e6"/><rect x="1600" y="376" width="14" height="6" rx="3" fill="#e6e6e6"/><circle cx="1603" cy="371" r="2" fill="#2a2a2a"/><circle cx="1611" cy="379" r="2" fill="#2a2a2a"/><use href="#chd" x="1620" y="375.5"/>
<rect x="1694" y="365" width="118" height="20" rx="4" fill="#232323" stroke="#3d3d3d"/>
<circle cx="1708" cy="374" r="5" fill="none" stroke="#ccc" stroke-width="1.1"/><path d="M1705 378L1700 383" stroke="#ccc" stroke-width="1.1"/>
<text x="1720" y="379" textLength="35" style="fill:#6c6c6c">Search</text>
<rect x="1891" y="365" width="20" height="20" rx="4" fill="#2a2a2a" stroke="#3d3d3d"/><use href="#chd" x="1901" y="375.5"/>

<path d="M1626 403V399H1630M1636 399H1640V403M1640 409V413H1636M1630 413H1626V409" fill="none" stroke="#ccc"/><rect x="1628" y="401" width="10" height="10" fill="#e6e6e6"/>
<text x="1649" y="410" textLength="29">Plane</text>
<use href="#chr" x="1697" y="406" />
<use href="#mesh" x="1717" y="405" style="color:#d8d8d8"/>
<text x="1733" y="410" textLength="29">Plane</text>
<path d="M1900 408L1905 403M1897 402L1906 411M1899 400L1908 409M1898 412L1894 416" fill="none" stroke="#909090" stroke-width="1.1"/><path d="M1902 402L1908 399L1909 404L1907 408" fill="none" stroke="#909090"/>

<rect x="1623" y="432" width="33" height="19" rx="4" fill="#2a2a2a"/><use href="#mesh" x="1635" y="441" style="color:#d8d8d8"/><use href="#chd" x="1649" y="442"/>
<rect x="1655" y="432" width="236" height="19" fill="#1d1d1d"/>
<text x="1662" y="446" textLength="29" style="fill:#e0e0e0">Plane</text>
<rect x="1890" y="432" width="21" height="19" rx="3" fill="#545454"/>
<path d="M1900.5 436L1907 438V443Q1906 448 1900.5 450Q1895 448 1894 443V438Z" fill="none" stroke="#aaa" stroke-width="1.1"/>

<!-- panels -->
<g fill="#3d3d3d">
<rect x="1623" y="462" width="288" height="121" rx="4"/>
<rect x="1623" y="585" width="288" height="146" rx="4"/>
<rect x="1623" y="733" width="288" height="25" rx="4"/>
<rect x="1623" y="760" width="288" height="25" rx="4"/>
<rect x="1623" y="787" width="288" height="25" rx="4"/>
<rect x="1623" y="814" width="288" height="25" rx="4"/>
<rect x="1623" y="841" width="288" height="25" rx="4"/>
<rect x="1623" y="868" width="288" height="25" rx="4"/>
<rect x="1623" y="895" width="288" height="25" rx="4"/>
</g>
<path d="M1630 473L1635 478L1640 473" fill="none" stroke="#aaa" stroke-width="1.3"/>
<path d="M1630 596L1635 601L1640 596" fill="none" stroke="#aaa" stroke-width="1.3"/>
<text class="sh" x="1645" y="479" textLength="76">Vertex Groups</text>
<text class="sh" x="1645" y="602" textLength="61">Shape Keys</text>
<rect x="1632" y="496" width="242" height="78" rx="3" fill="#2a2a2a"/>
<rect x="1632" y="619" width="242" height="78" rx="3" fill="#2a2a2a"/>
<path d="M1643 561V567L1649 564ZM1643 684V690L1649 687Z" fill="#b0b0b0"/>
<use href="#grip" x="1758" y="563"/><use href="#grip" x="1758" y="686"/>
<use href="#grip" x="1894" y="473"/><use href="#grip" x="1894" y="596"/>
<use href="#grip" x="1894" y="744"/><use href="#grip" x="1894" y="771"/><use href="#grip" x="1894" y="798"/><use href="#grip" x="1894" y="825"/><use href="#grip" x="1894" y="852"/><use href="#grip" x="1894" y="879"/><use href="#grip" x="1894" y="906"/>
<rect x="1884" y="496" width="18" height="18" rx="2" fill="#545454"/><rect x="1884" y="515" width="18" height="19" rx="2" fill="#4a4a4a"/><rect x="1884" y="542" width="18" height="19" rx="2" fill="#282828"/>
<path d="M1889 505H1897M1893 501V509" stroke="#eee" stroke-width="1.3"/><path d="M1889 524H1897" stroke="#777" stroke-width="1.3"/><path d="M1889 550L1893 554L1897 550" fill="none" stroke="#ddd" stroke-width="1.2"/>
<rect x="1884" y="619" width="18" height="18" rx="2" fill="#4a4a4a"/><rect x="1884" y="639" width="18" height="18" rx="2" fill="#4a4a4a"/><rect x="1884" y="665" width="18" height="19" rx="2" fill="#282828"/>
<path d="M1889 628H1897M1893 624V632M1889 648H1897" stroke="#777" stroke-width="1.3"/><path d="M1889 673L1893 677L1897 673" fill="none" stroke="#ddd" stroke-width="1.2"/>
<rect x="1632" y="707" width="12" height="12" rx="2" fill="#545454"/>
<text class="sh" x="1648" y="717" textLength="94">Add Rest Position</text>
<use href="#chr" x="1636" y="746"/><text class="sh" x="1645" y="750" textLength="48">UV Maps</text>
<use href="#chr" x="1636" y="773"/><text class="sh" x="1645" y="777" textLength="85">Color Attributes</text>
<use href="#chr" x="1636" y="800"/><text class="sh" x="1645" y="804" textLength="53">Attributes</text>
<use href="#chr" x="1636" y="827"/><text class="sh" x="1645" y="831" textLength="75">Texture Space</text>
<use href="#chr" x="1636" y="854"/><text class="sh" x="1645" y="858" textLength="41">Remesh</text>
<use href="#chr" x="1636" y="881"/><text class="sh" x="1645" y="885" textLength="78">Geometry Data</text>
<use href="#chr" x="1636" y="908"/><text class="sh" x="1645" y="912" textLength="99">Custom Properties</text>

<!-- prop tabs -->
<path d="M1589 783V760Q1589 757 1592 757H1615V783Z" fill="#303030"/>
<path d="M1597 402V408M1607 405V416" stroke="#ddd" stroke-width="2"/><path d="M1604 403V407Q1607 410 1610 407V403" fill="none" stroke="#ddd" stroke-width="1.6"/><path d="M1597 409L1599.5 411V416H1594.5V411Z" fill="#ddd"/>
<rect x="1595" y="441" width="14" height="11" rx="1" fill="#ddd"/><rect x="1598" y="438" width="7" height="3" fill="#ddd"/><path d="M1598 446h6" stroke="#1d1d1d"/>
<rect x="1595" y="467" width="14" height="4" fill="#ddd"/><path d="M1595 472H1609V477H1606V474H1598V477H1595Z" fill="#ddd"/><path d="M1598 475H1606V481H1598Z" fill="#ccc"/>
<path d="M1598 497H1609V509H1598Z" fill="none" stroke="#aaa"/><path d="M1595 500V512H1606" fill="none" stroke="#aaa"/><path d="M1599 508L1603 501L1608 508Z" fill="#ccc"/>
<path d="M1599 522L1595 530A4 4 0 0 0 1603 530Z" fill="#ccc"/><circle cx="1607" cy="524" r="1.7" fill="#ccc"/><circle cx="1605" cy="531" r="3.4" fill="none" stroke="#ccc"/>
<circle cx="1602" cy="558" r="6.5" fill="none" stroke="#b8565e" stroke-width="1.4"/><path d="M1598 555L1602 554L1604 557L1601 559L1602 563L1599 561Z" fill="#b8565e"/><path d="M1595 564L1609 552" stroke="#b8565e"/>
<path d="M1595 589H1609V592H1595ZM1596 593H1608V600H1596Z" fill="none" stroke="#ddd" stroke-width="1.2"/><path d="M1600 596H1604" stroke="#ddd"/>
<path d="M1595 626V623H1599M1605 623H1609V626M1609 634V637H1605M1599 637H1595V634" fill="none" stroke="#c17c3a" stroke-width="1.2"/><rect x="1597.5" y="625.5" width="9" height="9" fill="#c17c3a"/>
<path d="M1608 651L1605 654L1607 656L1610 654C1610 658 1606 660 1603 659L1597 665C1595 666 1594 664 1595 663L1601 657C1600 654 1603 650 1608 651Z" fill="#4b7fd1"/>
<g fill="#4b7fd1"><circle cx="1597" cy="680" r="2"/><circle cx="1607" cy="683" r="1.5"/><circle cx="1606" cy="691" r="2"/></g><path d="M1597 680L1607 691M1597 680L1607 683M1597 691V680" stroke="#4b7fd1"/>
<circle cx="1602" cy="713" r="4" fill="none" stroke="#4b7fd1" stroke-width="2"/><circle cx="1602" cy="713" r="1.3" fill="#4b7fd1"/><circle cx="1608" cy="708" r="1.5" fill="#4b7fd1"/><path d="M1596 716A7 7 0 0 0 1608 716" fill="none" stroke="#4b7fd1" stroke-width="1.6"/>
<ellipse cx="1602" cy="742" rx="8" ry="5" fill="none" stroke="#4b7fd1" stroke-width="1.6" transform="rotate(-40 1602 742)"/><circle cx="1601" cy="743" r="2.6" fill="none" stroke="#4b7fd1" stroke-width="1.3"/>
<use href="#mesh" x="1602" y="769" style="color:#1bc193"/>
<circle cx="1602" cy="798" r="7" fill="#b8565e"/><path d="M1602 798V805A7 7 0 0 1 1595 798ZM1602 798H1609A7 7 0 0 1 1602 805Z" fill="#1f1f1f" opacity="1"/><path d="M1602 798H1609A7 7 0 0 1 1602 805Z" fill="#b8565e"/>
<rect x="1595" y="827" width="14" height="14" fill="#b8565e"/><path d="M1595 827h3.5v3.5h-3.5zM1602 827h3.5v3.5h-3.5zM1598.5 830.5h3.5v3.5h-3.5zM1605.5 830.5h3.5v3.5h-3.5zM1595 834h3.5v3.5h-3.5zM1602 834h3.5v3.5h-3.5zM1598.5 837.5h3.5v3.5h-3.5zM1605.5 837.5h3.5v3.5h-3.5z" fill="#1d1d1d"/>

<!-- status bar -->
<rect y="1019" width="1919" height="21" fill="#181818"/>
<rect x="11" y="1023" width="11" height="14" rx="4" fill="none" stroke="#9a9a9a"/><rect x="11" y="1023" width="5" height="7" rx="2" fill="#ccc"/>
<text class="st" x="28" y="1034" textLength="77">Change Frame</text>
<rect x="222" y="1023" width="11" height="14" rx="4" fill="none" stroke="#9a9a9a"/><rect x="226" y="1023" width="3" height="7" rx="1" fill="#ccc"/>
<text class="st" x="239" y="1034" textLength="49">Pan View</text>
<rect x="433" y="1023" width="11" height="14" rx="4" fill="none" stroke="#9a9a9a"/><rect x="438" y="1023" width="6" height="7" rx="2" fill="#ccc"/>
<text class="st" x="450" y="1034" textLength="61">Dope Sheet</text>
<circle cx="1861" cy="1030" r="6.5" fill="none" stroke="#777"/><path d="M1855 1030H1867M1861 1023.5C1858 1026 1858 1034 1861 1036.5M1861 1023.5C1864 1026 1864 1034 1861 1036.5M1854 1024L1868 1037" stroke="#777" fill="none" stroke-width=".9"/>
<path d="M1876.5 1024V1037" stroke="#666" stroke-width="1.2"/>
<text class="st" x="1882" y="1034" textLength="27">4.2.2</text>

<!-- TASKBAR -->
<rect y="1040" width="1919" height="40" fill="#1b1b1b"/>
<path d="M15 1057L22 1055.7V1061H15ZM23 1055.4L31 1054V1061H23ZM15 1062H22V1067.3L15 1066ZM23 1062H31V1068.7L23 1067.4Z" fill="#fff"/>
<rect x="47" y="1040" width="288" height="40" fill="#f2f2f2"/>
<rect x="47" y="1078" width="288" height="2" fill="#c8c8c8"/>
<circle cx="68" cy="1058" r="5.5" fill="none" stroke="#222" stroke-width="1.2"/><path d="M64 1063L60 1068" stroke="#222" stroke-width="1.3"/>
<text x="87" y="1066" textLength="61" style="font-size:15px;fill:#222">Pesquisar</text>
<!-- web -->
<path d="M335 1040H310C316 1058 325 1068 335 1075ZM335 1040L318 1062M335 1040L326 1070M335 1052L326 1044M328 1062L320 1048M335 1063L322 1056" fill="none" stroke="#c4b4dc" stroke-width=".9"/>
<!-- leaf -->
<path d="M260 1058L268 1060L272 1056L273 1062L277 1066L271 1067L268 1072L265 1067L261 1065L265 1062Z" fill="#f0a01e"/>
<!-- pumpkin -->
<ellipse cx="295" cy="1063" rx="17" ry="15" fill="#dd5f14"/><ellipse cx="295" cy="1063" rx="8" ry="15" fill="#ec7a1e"/>
<path d="M293 1049C292 1046 290 1044 289 1044L292 1042C294 1044 297 1047 297 1049Z" fill="#5a8a2a"/>
<path d="M284 1059L290 1059L287 1054ZM300 1059L306 1059L303 1054Z" fill="#3a1606"/>
<path d="M282 1065C288 1075 302 1075 308 1065C302 1068 288 1068 282 1065Z" fill="#3a1606"/>
<!-- task view -->
<path d="M351 1052H365M351 1070H365M352 1056H363V1066H352ZM365 1055V1058M365 1060V1062M365 1064V1067" fill="none" stroke="#fff" stroke-width="1.1"/>
<!-- edge -->
<circle cx="410" cy="1061" r="13" fill="url(#edge)"/><path d="M398 1058C402 1048 420 1046 423 1062C423 1066 418 1068 414 1067C418 1062 412 1056 406 1058C401 1060 400 1066 403 1071C398 1068 397 1062 398 1058Z" fill="#55d17a"/>
<path d="M405 1066C408 1072 417 1074 421 1068L415 1072Z" fill="#33c0ea"/>
<!-- mail -->
<path d="M446 1058L458.5 1049L471 1058V1071H446Z" fill="url(#mail)"/><path d="M446 1058L458.5 1066L471 1058L471 1071H446Z" fill="#31a6e8"/><path d="M451 1054H466V1060L458.5 1065L451 1060Z" fill="#e4f2fb"/>
<!-- explorer -->
<path d="M497 1051H506L509 1054H519V1072H497Z" fill="#f6c343"/><rect x="497" y="1056" width="22" height="16" fill="#fdd667"/><path d="M503 1072V1066H513V1072Z" fill="#2a8bdb"/><path d="M505 1064H511L508 1061Z" fill="#2a8bdb"/>
<rect x="488" y="1077" width="40" height="3" fill="#76b9ed"/>
<!-- store -->
<path d="M545 1054H567V1070Q567 1072 565 1072H547Q545 1072 545 1070Z" fill="#f3f3f3"/><path d="M551 1054V1050H561V1054" fill="none" stroke="#2cb4ea" stroke-width="1.6"/>
<rect x="551" y="1058" width="4.5" height="4.5" fill="#e8492b"/><rect x="556.5" y="1058" width="4.5" height="4.5" fill="#7dba1e"/><rect x="551" y="1063.5" width="4.5" height="4.5" fill="#1ea2ea"/><rect x="556.5" y="1063.5" width="4.5" height="4.5" fill="#f7b80e"/>
<!-- opera -->
<ellipse cx="606" cy="1061" rx="11" ry="13" fill="none" stroke="#c5152f" stroke-width="1.8"/><ellipse cx="606" cy="1061" rx="6" ry="11.5" fill="none" stroke="#c5152f" stroke-width="1"/>
<rect x="586" y="1077" width="32" height="3" fill="#76b9ed"/><rect x="619" y="1077" width="8" height="3" fill="#4d7ca0"/>
<!-- blender -->
<rect x="631" y="1040" width="48" height="40" fill="#3f3f3f"/><rect x="631" y="1077" width="48" height="3" fill="#76b9ed"/>
<use href="#blend" transform="translate(644,1050) scale(.92)" style="color:#e87d0d"/>
<!-- weather -->
<path d="M1526 1067C1521 1067 1521 1060 1526 1060C1527 1054 1534 1054 1535 1058C1541 1056 1546 1061 1543 1067Z" fill="#c7dcf5"/><path d="M1526 1067C1523 1062 1528 1061 1534 1060C1540 1060 1544 1063 1543 1067Z" fill="#9dc1ec"/>
<circle cx="1539" cy="1053.5" r="5.5" fill="#cc1f1f"/><text x="1537.2" y="1057" style="font-size:9px;fill:#fff">1</text>
<text x="1554" y="1066" textLength="31" style="font-size:14px;fill:#fff">22°C</text>
<text x="1592" y="1066" textLength="53" style="font-size:14px;fill:#fff">Nublado</text>
<path d="M1670 1064L1676 1058L1682 1064" fill="none" stroke="#fff" stroke-width="1.2"/>
<rect x="1695" y="1057" width="7" height="9" rx="2" fill="none" stroke="#fff"/><path d="M1702 1060L1705 1058V1065L1702 1063ZM1694 1054Q1699 1052 1703 1054M1694 1068Q1699 1070 1703 1068" fill="none" stroke="#fff" stroke-width=".9"/>
<path d="M1720 1055H1732V1064H1716V1056M1724 1064V1068M1720 1068H1728" fill="none" stroke="#fff" stroke-width="1.1"/><rect x="1716" y="1055" width="5" height="5" fill="#1b1b1b" stroke="#fff" stroke-width=".9"/>
<path d="M1741 1058H1744L1748 1055V1067L1744 1064H1741ZM1751 1058Q1753 1061 1751 1064M1753.5 1056Q1756.5 1061 1753.5 1066M1756 1054Q1760 1061 1756 1068" fill="none" stroke="#fff" stroke-width="1"/>
<text x="1766" y="1055" textLength="23" style="fill:#f2f2f2">POR</text><text x="1768" y="1073" textLength="20" style="fill:#f2f2f2">PTB</text>
<text x="1817" y="1055" textLength="27" style="fill:#f2f2f2">20:07</text><text x="1802" y="1073" textLength="58" style="fill:#f2f2f2">11/10/2024</text>
<path d="M1878 1053H1894V1066H1888L1884 1069V1066H1878Z" fill="#fff"/><path d="M1881 1057H1891M1881 1060H1891M1881 1063H1887" stroke="#1b1b1b"/>
<circle cx="1893" cy="1067" r="7.5" fill="#333" stroke="#999"/><text x="1890" y="1071.5" style="font-size:11px;fill:#ddd;font-weight:bold">1</text>
<path d="M1914.5 1040V1080" stroke="#777"/>
</svg>
</body></html>
